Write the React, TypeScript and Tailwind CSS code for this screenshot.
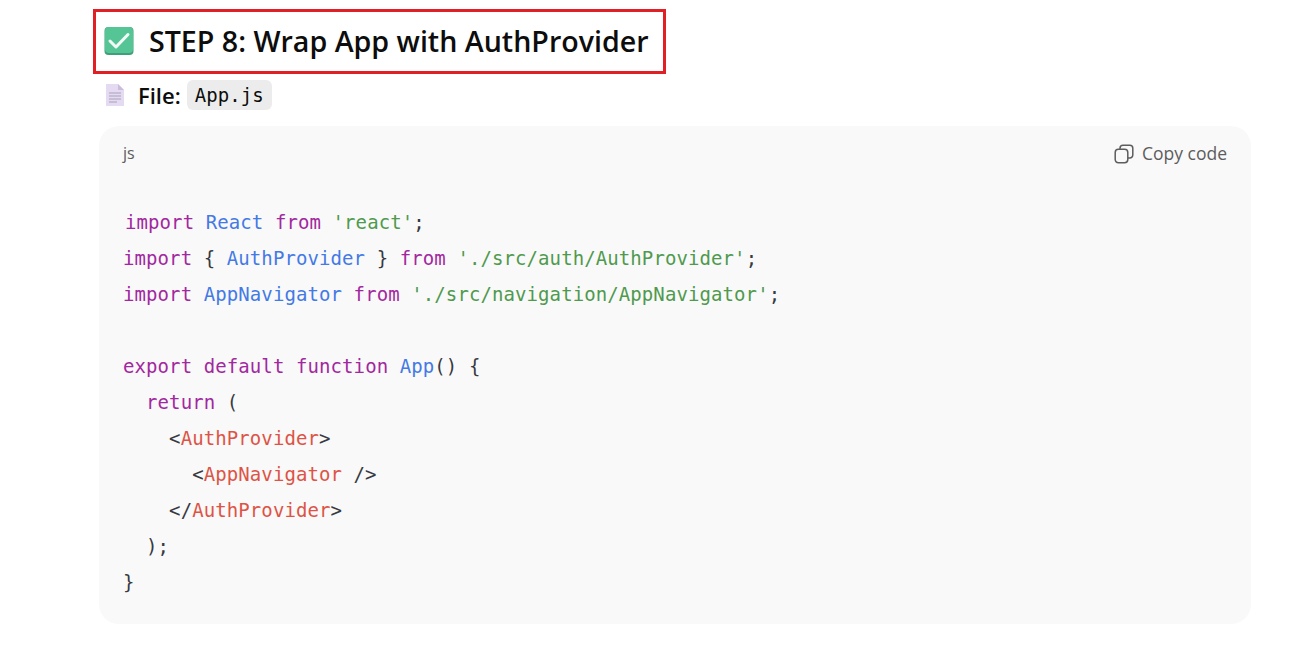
const kw = 'text-[#a2289f]';
const fn = 'text-[#4479e6]';
const str = 'text-[#4f9a4e]';
const tag = 'text-[#dd5446]';

function CheckEmoji() {
  return (
    <svg width="30" height="30" viewBox="0 0 30 30" className="shrink-0">
      <rect x="0.5" y="1" width="29" height="28" rx="4" fill="#3f9f78" />
      <rect x="1" y="1" width="28" height="26" rx="4" fill="#56c596" />
      <path d="M6 15l6 6L24 8.5" fill="none" stroke="#f4fbf7" strokeWidth="3" strokeLinecap="round" strokeLinejoin="round" />
    </svg>
  );
}

function DocEmoji() {
  return (
    <svg width="20" height="24" viewBox="0 0 20 24" className="shrink-0">
      <path d="M1 1h12l6 6v16H1z" fill="#e4daf2" />
      <path d="M13 1l6 6h-6z" fill="#c9bcdc" />
      <path d="M4 10h12M4 13h12M4 16h12M4 19h8" stroke="#a9a2b8" strokeWidth="1" />
    </svg>
  );
}

function CopyIcon() {
  return (
    <svg width="20" height="20" viewBox="0 0 20 20" fill="none" stroke="#5d5d5d" strokeWidth="1.5" className="shrink-0">
      <rect x="1.2" y="5.2" width="12.6" height="13.6" rx="3.2" />
      <path d="M6 5V4.2A3 3 0 0 1 9 1.2h6.8a3 3 0 0 1 3 3V11a3 3 0 0 1-3 3H14" />
    </svg>
  );
}

export default function App() {
  return (
    <div className="min-h-[655px] bg-white pt-[9px] pl-[93px] pr-[41px] font-['Open_Sans','Noto_Sans',sans-serif] text-[#0d0d0d]">
      <div className="flex h-[65px] w-[573px] items-center gap-[15px] border-[3px] border-[#e02024] pb-[1px] pl-[8px]">
        <CheckEmoji />
        <h1 className="whitespace-nowrap text-[28.6px] font-semibold leading-none">STEP 8: Wrap App with AuthProvider</h1>
      </div>

      <div className="mt-[6px] flex h-[30px] items-center pl-[12px]">
        <DocEmoji />
        <span className="ml-[13px] text-[22px] font-semibold">File:</span>
        <code className="ml-[6px] rounded-md bg-[#ececec] px-[8px] py-[1px] font-['DejaVu_Sans_Mono',monospace] text-[19px] leading-[28px] tracking-[0.09px]">App.js</code>
      </div>

      <div className="ml-[6px] mt-[16px] h-[498px] w-[1152px] rounded-[20px] bg-[#f9f9f9]">
        <div className="flex h-[55px] items-center justify-between pl-[24px] pr-[24px] text-[#5d5d5d]">
          <span className="pb-[2px] text-[16px]">js</span>
          <span className="flex items-center gap-[8px] text-[17.5px]">
            <CopyIcon />
            Copy code
          </span>
        </div>
        <pre className="mt-[23px] pl-[24px] font-['DejaVu_Sans_Mono',monospace] text-[19px] leading-[36px] tracking-[0.09px] text-[#383a42]">
          <div className="pl-[2px]"><span className={kw}>import</span> <span className={fn}>React</span> <span className={kw}>from</span> <span className={str}>'react'</span>;</div>
          <div><span className={kw}>import</span> {'{ '}<span className={fn}>AuthProvider</span>{' } '}<span className={kw}>from</span> <span className={str}>'./src/auth/AuthProvider'</span>;</div>
          <div><span className={kw}>import</span> <span className={fn}>AppNavigator</span> <span className={kw}>from</span> <span className={str}>'./src/navigation/AppNavigator'</span>;</div>
          <div>&nbsp;</div>
          <div><span className={kw}>export</span> <span className={kw}>default</span> <span className={kw}>function</span> <span className={fn}>App</span>() {'{'}</div>
          <div>  <span className={kw}>return</span> (</div>
          <div>    &lt;<span className={tag}>AuthProvider</span>&gt;</div>
          <div>      &lt;<span className={tag}>AppNavigator</span> /&gt;</div>
          <div>    &lt;/<span className={tag}>AuthProvider</span>&gt;</div>
          <div>  );</div>
          <div>{'}'}</div>
        </pre>
      </div>
    </div>
  );
}
